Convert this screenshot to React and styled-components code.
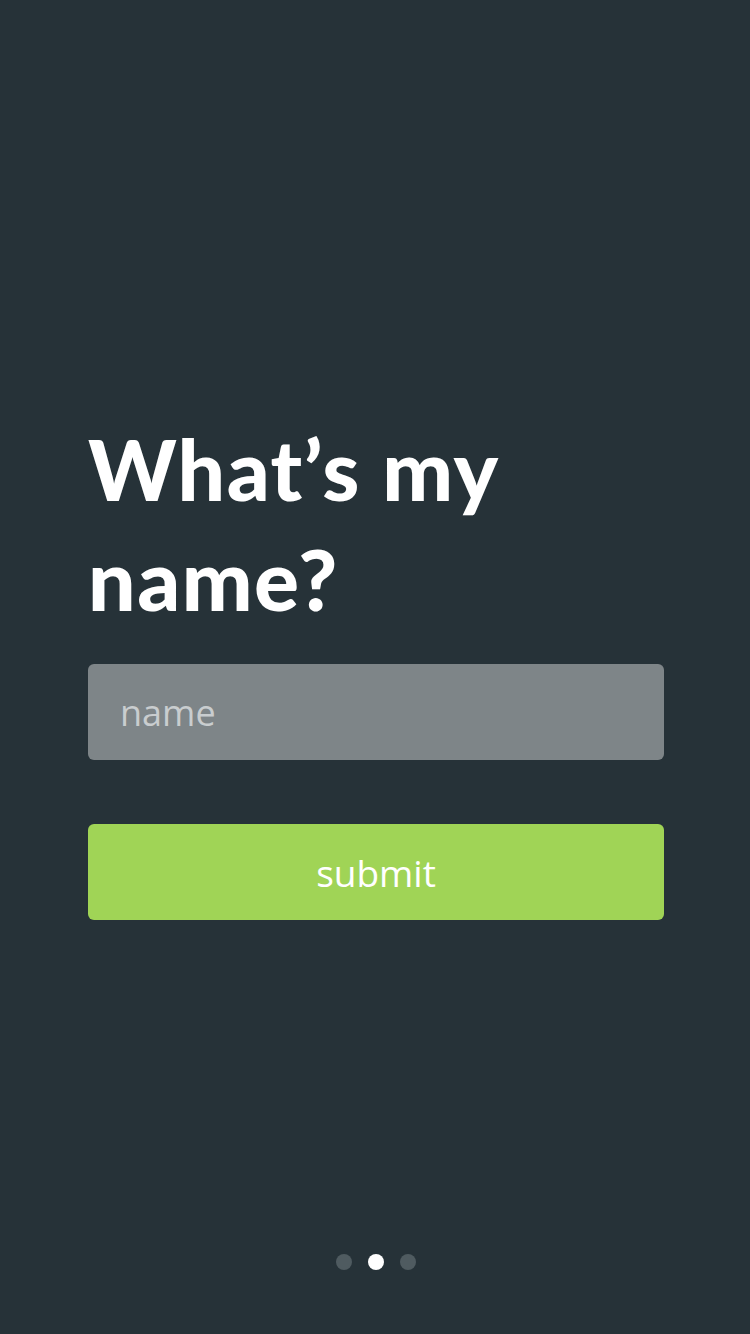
import styled, { createGlobalStyle } from 'styled-components';

const GlobalStyle = createGlobalStyle`
  html, body {
    margin: 0;
    padding: 0;
    background: #263238;
  }
  * {
    box-sizing: border-box;
  }
`;

const Screen = styled.div`
  width: 750px;
  height: 1334px;
  background: #263238;
  display: flex;
  flex-direction: column;
  font-family: Lato, "Open Sans", sans-serif;
`;

const Content = styled.main`
  flex: 1;
  padding: 414px 86px 0 88px;
  display: flex;
  flex-direction: column;
`;

const Title = styled.h1`
  margin: 0 0 30px;
  color: #fff;
  font-size: 84px;
  line-height: 110px;
  font-weight: 900;
  letter-spacing: 1.5px;
`;

const NameInput = styled.input`
  width: 100%;
  height: 96px;
  border: none;
  border-radius: 6px;
  background: #7e8588;
  padding: 0 32px;
  font-family: "Open Sans", sans-serif;
  font-size: 36px;
  color: #fff;
  outline: none;

  &::placeholder {
    color: #c9cdcf;
  }
`;

const SubmitButton = styled.button`
  margin-top: 64px;
  width: 100%;
  height: 96px;
  border: none;
  border-radius: 6px;
  background: #a0d456;
  color: #fff;
  font-family: "Open Sans", sans-serif;
  font-size: 37px;
  cursor: pointer;
`;

const Pager = styled.nav`
  display: flex;
  justify-content: center;
  gap: 16px;
  padding: 0 0 64px 2px;
`;

const Dot = styled.span`
  width: 16px;
  height: 16px;
  border-radius: 50%;
  background: ${(p) => (p.$active ? '#ffffff' : '#4f5b60')};
`;

export default function App() {
  return (
    <>
      <GlobalStyle />
      <Screen>
        <Content>
          <Title>
            What’s my
            <br />
            name?
          </Title>
          <NameInput placeholder="name" />
          <SubmitButton>submit</SubmitButton>
        </Content>
        <Pager>
          {[0, 1, 2].map((i) => (
            <Dot key={i} $active={i === 1} />
          ))}
        </Pager>
      </Screen>
    </>
  );
}
